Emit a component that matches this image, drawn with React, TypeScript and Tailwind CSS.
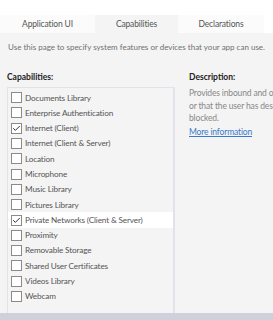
import { Check } from 'lucide-react';

export default function App() {
  const caps = [
    { name: 'Documents Library', on: false },
    { name: 'Enterprise Authentication', on: false },
    { name: 'Internet (Client)', on: true },
    { name: 'Internet (Client & Server)', on: false },
    { name: 'Location', on: false },
    { name: 'Microphone', on: false },
    { name: 'Music Library', on: false },
    { name: 'Pictures Library', on: false },
    { name: 'Private Networks (Client & Server)', on: true, selected: true },
    { name: 'Proximity', on: false },
    { name: 'Removable Storage', on: false },
    { name: 'Shared User Certificates', on: false },
    { name: 'Videos Library', on: false },
    { name: 'Webcam', on: false },
  ];

  return (
    <main
      className="w-[273px] h-[320px] overflow-hidden bg-white flex flex-col text-[8px] tracking-[-0.15px]"
      style={{ fontFamily: 'Lato, "Noto Sans", sans-serif' }}
    >
      {/* Tabs */}
      <div className="mt-[15px] h-[18px] flex text-[8.5px]">
        <div className="w-[95px] bg-[#fbfbfb] flex items-center justify-center text-[#555]">Application UI</div>
        <div className="w-[83px] bg-[#f4f4f4] flex items-center justify-center text-[#555]">Capabilities</div>
        <div className="w-[86px] bg-[#fbfbfb] flex items-center justify-center text-[#555]">Declarations</div>
      </div>

      {/* Content */}
      <div className="flex-1 bg-[#f4f4f4] flex flex-col min-h-0">
        <p className="px-2 pt-[8px] text-[#707070] whitespace-nowrap tracking-normal leading-[12px]">
          Use this page to specify system features or devices that your app can use.
        </p>

        <div className="flex flex-1 min-h-0 mt-[18px]">
          {/* Left: capabilities list */}
          <div className="w-[175px] pl-[7px] flex flex-col min-h-0">
            <h2 className="font-bold text-[#222] text-[8.5px] tracking-normal leading-[12px] mb-[4px]">Capabilities:</h2>
            <ul className="flex-1 border-l border-t border-r-2 border-[#e2e2ea] pt-[2px]">
              {caps.map((c) => (
                <li
                  key={c.name}
                  className={`h-[15.3px] flex items-center pl-[3px] whitespace-nowrap overflow-hidden ${
                    c.selected ? 'bg-white' : ''
                  }`}
                >
                  <span className="w-[11px] h-[11px] border border-[#8a8a8a] bg-white flex items-center justify-center mr-[3px] shrink-0">
                    {c.on && <Check size={9} strokeWidth={2.5} className="text-[#222]" />}
                  </span>
                  <span className="text-[#555] text-[8.2px]">{c.name}</span>
                </li>
              ))}
            </ul>
          </div>

          {/* Right: description */}
          <div className="flex-1 pl-[14px] overflow-hidden">
            <h2 className="font-bold text-[#222] text-[8.5px] tracking-normal leading-[12px]">Description:</h2>
            <div className="mt-[4px] text-[#888] leading-[12.5px] whitespace-nowrap text-[8.5px]">
              <p>Provides inbound and outbound access</p>
              <p>or that the user has designated as</p>
              <p>blocked.</p>
            </div>
            <a href="#" className="block mt-[1px] text-[#3a78c9] underline leading-[12.5px] whitespace-nowrap text-[8.5px]">
              More information
            </a>
          </div>
        </div>
      </div>

      {/* Bottom bar */}
      <div className="h-[7px] bg-[#cfd0dc]" />
    </main>
  );
}
